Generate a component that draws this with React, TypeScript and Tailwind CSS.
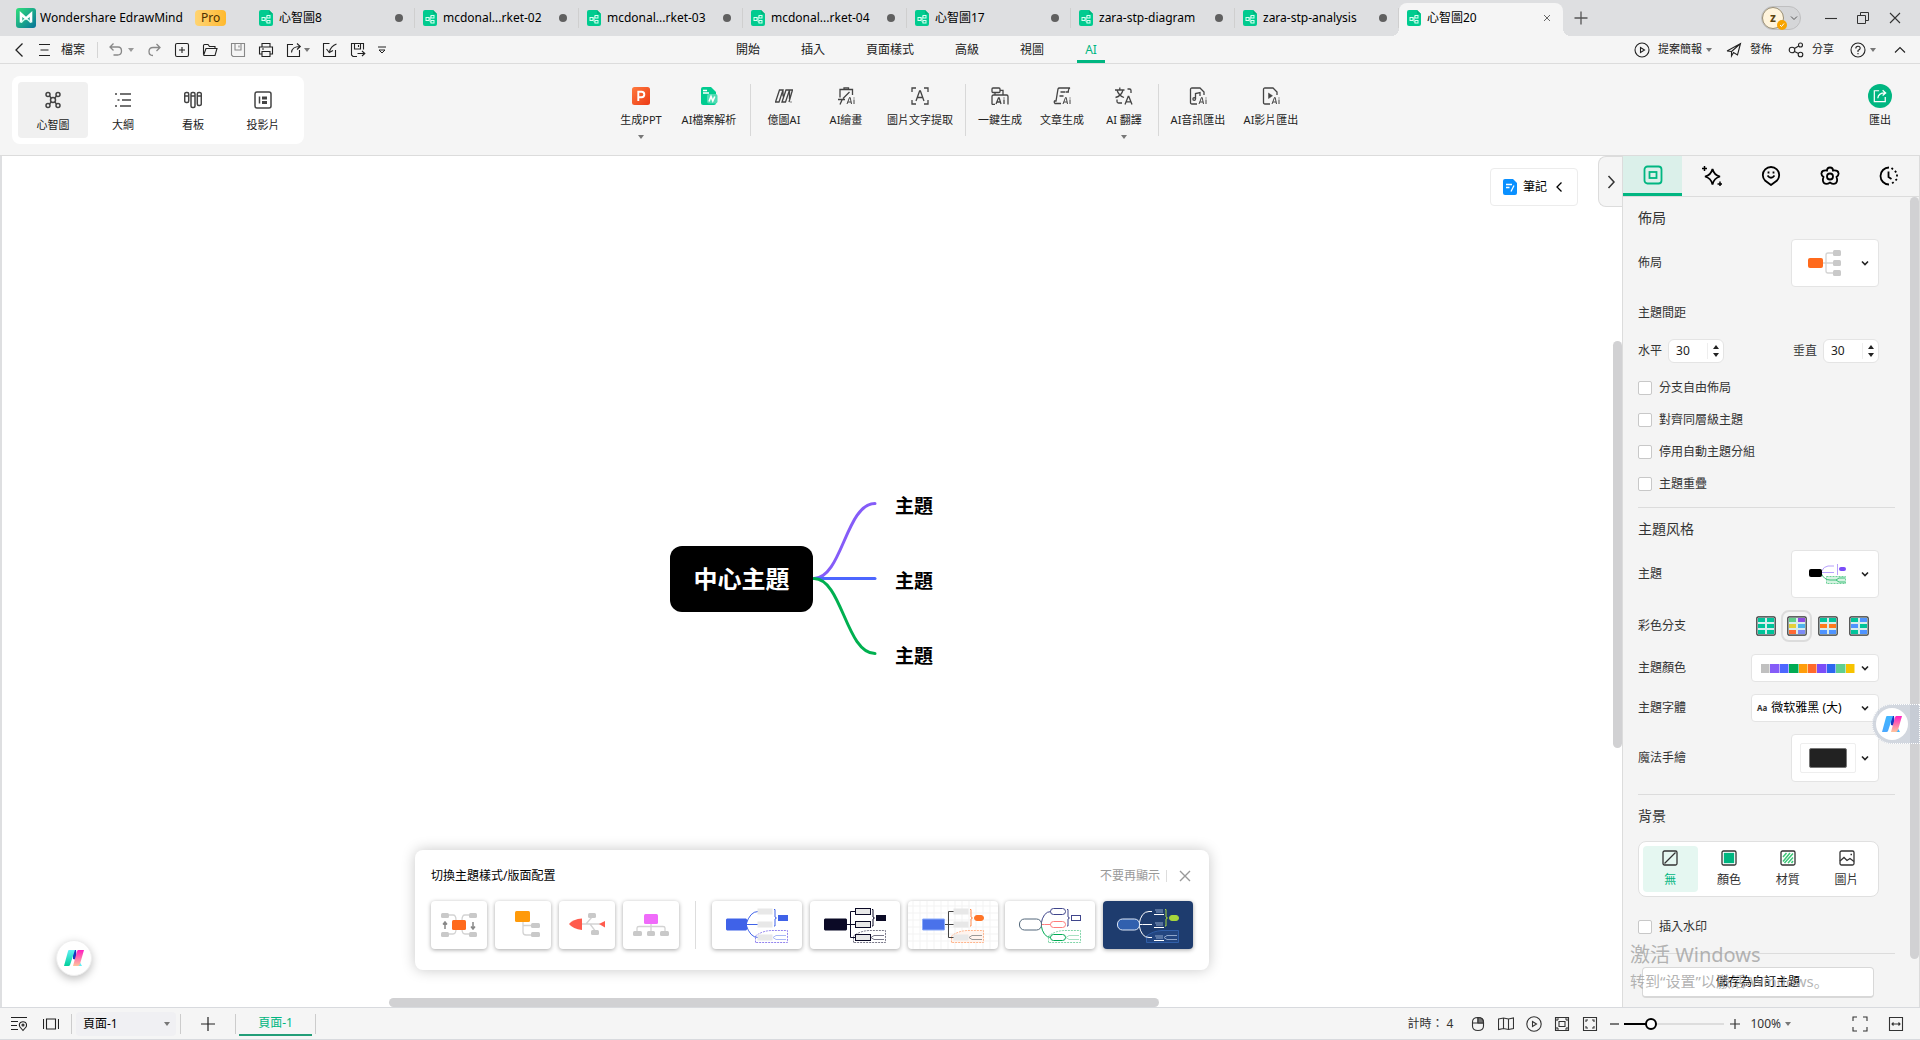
import React from "react";
import type { ReactNode } from "react";

type IconProps = {
  children: ReactNode;
  className?: string;
  box?: string;
  sw?: number;
};

const Icon = ({ children, className = "size-4", box = "0 0 16 16", sw = 1.1 }: IconProps) => (
  <svg
    viewBox={box}
    className={`shrink-0 ${className}`}
    fill="none"
    stroke="currentColor"
    strokeWidth={sw}
    aria-hidden="true"
  >
    {children}
  </svg>
);

const Caret = ({ className = "text-[#777]" }: { className?: string }) => (
  <svg viewBox="0 0 6 4" className={`w-1.5 h-1 shrink-0 ${className}`} aria-hidden="true">
    <path d="M0 0H6L3 4Z" fill="currentColor" />
  </svg>
);

const ChevronDown = () => (
  <Icon className="w-2 h-2 text-[#222]" box="0 0 8 8" sw={1.6}>
    <path d="M1 2.500L4 5.500L7 2.500" />
  </Icon>
);

const DocIcon = () => (
  <svg viewBox="0 0 14 16" className="w-3.5 h-4 shrink-0" aria-hidden="true">
    <path d="M2 0H10L14 4V14A2 2 0 0 1 12 16H2A2 2 0 0 1 0 14V2A2 2 0 0 1 2 0Z" fill="#00cb8f" />
    <path d="M10 0L14 4H11A1 1 0 0 1 10 3Z" fill="#00b37c" />
    <g fill="none" stroke="#d9fff2">
      <rect x="3" y="7.500" width="3" height="3" />
      <rect x="8" y="5.500" width="3" height="2.500" />
      <rect x="8" y="10.500" width="3" height="2.500" />
      <path d="M6 9H8M7 9V12H8M7 9V7H8" strokeWidth="0.700" />
    </g>
  </svg>
);

const AiLogo = ({ id, from, to }: { id: string; from: string; to: string }) => (
  <svg viewBox="0 0 20 16" className="w-5 h-4" aria-hidden="true">
    <defs>
      <linearGradient id={`${id}-l`} x1="0" y1="0" x2="0" y2="1">
        <stop offset="0" stopColor={from} />
        <stop offset="1" stopColor={to} />
      </linearGradient>
      <linearGradient id={`${id}-r`} x1="0" y1="0" x2="0" y2="1">
        <stop offset="0" stopColor="#ff1fc0" />
        <stop offset="1" stopColor="#ffc49b" />
      </linearGradient>
    </defs>
    <path d="M14 9L18 16H13Z" fill={from} />
    <path d="M9 0H12L13 10L9 9Z" fill="#1738c0" />
    <path d="M5 0H11L6 15Q5.600 16 4.500 16H0L4 1.200Q4.300 0 5 0Z" fill={`url(#${id}-l)`} />
    <path d="M14 0H20L16 14Q15.500 16 14 16H9L13 1.500Q13.400 0 14 0Z" fill={`url(#${id}-r)`} />
  </svg>
);

/* TITLE BAR */

const tabs = [
  "心智圖8",
  "mcdonal...rket-02",
  "mcdonal...rket-03",
  "mcdonal...rket-04",
  "心智圖17",
  "zara-stp-diagram",
  "zara-stp-analysis",
];

const TitleBar = () => (
  <header className="flex h-9 items-center bg-[#dedfe1] text-xs text-black">
    <div className="flex w-[251px] shrink-0 items-center pl-4">
      <svg viewBox="0 0 20 20" className="mr-1 size-5" aria-hidden="true">
        <defs>
          <linearGradient id="brand" x1="0" y1="0" x2="1" y2="1">
            <stop offset="0" stopColor="#2fe07a" />
            <stop offset="1" stopColor="#07729a" />
          </linearGradient>
        </defs>
        <rect width="20" height="20" rx="3" fill="url(#brand)" />
        <path d="M5 14.500V6L10 10.500L15 6V14.500" fill="none" stroke="#fff" strokeWidth="2.600" />
        <path d="M5 14.500L9 11M15 14.500L11 11" fill="none" stroke="#d5fff0" strokeWidth="1.500" />
      </svg>
      <span className="whitespace-nowrap">Wondershare EdrawMind</span>
      <span className="ml-3 rounded bg-gradient-to-r from-[#ffd471] to-[#ffb92b] px-1.5 text-xs leading-4 text-[#4d3000]">
        Pro
      </span>
    </div>
    <nav className="flex h-full shrink-0" aria-label="Documents">
      {tabs.map((tab) => (
        <a key={tab} href="#" className="flex w-[164px] items-center pl-2">
          <DocIcon />
          <span className="ml-1.5 flex-1 whitespace-nowrap">{tab}</span>
          <span className="mr-[11px] size-2 rounded-full bg-[#606060]"></span>
          <span className="h-5 w-px bg-[#cfcfcf]"></span>
        </a>
      ))}
      <a
        href="#"
        aria-current="page"
        className="relative mt-[3px] flex w-[164px] items-center rounded-t-lg bg-[#f5f5f5] pb-[3px] pl-2 before:absolute before:-left-2 before:bottom-0 before:size-2 before:bg-[radial-gradient(circle_at_0_0,transparent_8px,#f5f5f5_8px)] after:absolute after:-right-2 after:bottom-0 after:size-2 after:bg-[radial-gradient(circle_at_100%_0,transparent_8px,#f5f5f5_8px)]"
      >
        <DocIcon />
        <span className="ml-1.5 flex-1">心智圖20</span>
        <Icon className="mr-3 size-2 text-[#666]" box="0 0 8 8" sw={1}>
          <path d="M1 1L7 7M7 1L1 7" />
        </Icon>
      </a>
    </nav>
    <button aria-label="New tab" className="ml-2.5 text-[#555]">
      <Icon sw={1.3}>
        <path d="M8 1.500V14.500M1.500 8H14.500" />
      </Icon>
    </button>
    <div className="ml-auto flex items-center pr-4 text-[#333]">
      <button className="mr-6 flex h-6 w-10 items-center rounded-full border border-[#bfbfc0] bg-[#d5d6d8]">
        <span className="relative flex size-[22px] items-center justify-center rounded-full border border-[#9a8f75] bg-[#fff4dc] text-xs font-bold text-[#5c4410]">
          z
          <span className="absolute -right-1 -bottom-0.5 flex size-2.5 items-center justify-center rounded-full bg-[#f8a400]">
            <Icon className="size-2 text-white" box="0 0 8 8" sw={1}>
              <path d="M2 4L3.500 5.500L6 2.500" />
            </Icon>
          </span>
        </span>
        <Icon className="ml-1.5 size-2 text-[#555]" box="0 0 8 8" sw={1}>
          <path d="M1 2.500L4 5.500L7 2.500" />
        </Icon>
      </button>
      <button aria-label="Minimize" className="mr-5">
        <Icon className="size-3" box="0 0 12 12">
          <path d="M0 6.500H12" />
        </Icon>
      </button>
      <button aria-label="Restore" className="mr-5">
        <Icon className="size-3" box="0 0 12 12" sw={1}>
          <path d="M.5 3.500H8.500V11.500H.5ZM3.500 3.500V.5H11.500V8.500H8.500" />
        </Icon>
      </button>
      <button aria-label="Close" className="mr-[3px]">
        <Icon className="size-3" box="0 0 12 12">
          <path d="M1 1L11 11M11 1L1 11" />
        </Icon>
      </button>
    </div>
  </header>
);

/* MENU BAR */

const menus = ["開始", "插入", "頁面樣式", "高級", "視圖"];

const MenuBar = () => (
  <div className="flex h-7 border-b border-[#dcdcdc] bg-[#f5f5f5] text-xs text-[#222]">
    <div className="flex flex-1 items-center pl-[11px]">
      <button aria-label="Back">
        <Icon sw={1.3}>
          <path d="M11.500 1.500L5 8L11.500 14.500" />
        </Icon>
      </button>
      <button className="ml-2.5 flex items-center gap-2">
        <Icon>
          <path d="M2 2.500H13M3.500 8H11.500M2 13.500H13" />
        </Icon>
        檔案
      </button>
      <span className="mr-2.5 ml-3 h-4 w-px bg-[#d5d5d5]"></span>
      <button aria-label="Undo" className="flex items-center gap-1 text-[#888]">
        <Icon sw={1.3}>
          <path d="M5.500 1.500L2 5L5.500 8.500M2 5H10Q13.500 5 13.500 9Q13.500 13 9.500 13H5.500" />
        </Icon>
        <Caret className="text-[#999]" />
      </button>
      <button aria-label="Redo" className="ml-3 text-[#888]">
        <Icon sw={1.3}>
          <path d="M10.500 2L14 5.500L10.500 9M14 5.500H7Q3 5.500 3 9.500Q3 13.500 7 13.500" />
        </Icon>
      </button>
      <button aria-label="New" className="ml-3">
        <Icon>
          <rect x="1.500" y="1.500" width="13" height="13" rx="1.500" />
          <path d="M8 5V11M5 8H11" />
        </Icon>
      </button>
      <button aria-label="Open" className="ml-3">
        <Icon>
          <path d="M1.500 12.500V3.500Q1.500 2.500 2.500 2.500H6L7.500 4.500H13V6.500M1.700 13L4 6.500H15L13 13.500H2Z" />
        </Icon>
      </button>
      <button aria-label="Save" className="ml-3 text-[#888]">
        <Icon>
          <path d="M1.500 1.500H14.500V14.500H3L1.500 13ZM5 1.500V8H11V1.500M9 3.500V5.500" />
        </Icon>
      </button>
      <button aria-label="Print" className="ml-3">
        <Icon>
          <path d="M4 5V1.500H12V5M4 12H1.500V5H14.500V12H12M4 9.500H12V14.500H4ZM4 7H6" />
        </Icon>
      </button>
      <button aria-label="Share file" className="ml-3 flex items-center gap-0.5">
        <Icon>
          <path d="M7 2.500H1.500V14.500H13.500V8M5.500 10.500Q6 4.500 14 4.500M11 1.500L14.300 4.500L11 7.500" />
        </Icon>
        <Caret />
      </button>
      <button aria-label="Import" className="ml-3">
        <Icon>
          <path d="M7.500 1.500H1.500V14.500H13.500V8M14.500 2Q9 4 7.500 9.500M4.500 7L7.300 10.500L11 8.500" />
        </Icon>
      </button>
      <button aria-label="Save as" className="ml-3">
        <Icon>
          <path d="M7 14.500H3L1.500 13V1.500H13.500V7.500M4.500 1.500V7H10.500V1.500M8.500 3V5M7.500 11.500H14.500M12 9L14.800 11.500L12 14" />
        </Icon>
      </button>
      <button aria-label="More" className="ml-3">
        <Icon className="size-2" box="0 0 8 8" sw={1}>
          <path d="M0 1H8M1 4H7L4 7Z" />
        </Icon>
      </button>
    </div>
    <nav className="mr-[84px] flex gap-[41px]" aria-label="Ribbon">
      {menus.map((menu) => (
        <a key={menu} href="#" className="flex items-center">
          {menu}
        </a>
      ))}
      <a
        href="#"
        className="-mx-2 flex w-7 items-center justify-center border-b-3 border-[#00b681] pt-[3px] text-[#00b681]"
      >
        AI
      </a>
    </nav>
    <div className="flex flex-1 items-center justify-end pr-[14px] text-[11px]">
      <button className="mr-3.5 flex items-center gap-1">
        <Icon className="mr-1 size-4">
          <circle cx="8" cy="8" r="7" />
          <path d="M6.500 5.500L10.500 8L6.500 10.500Z" />
        </Icon>
        提案簡報
        <Caret />
      </button>
      <button className="mr-4 flex items-center gap-2">
        <Icon>
          <path d="M1 9L14.500 1.500L11.500 13L7.500 10.500L5.500 14V9.500L14.500 1.500M1 9L5.500 9.500" />
        </Icon>
        發佈
      </button>
      <button className="mr-4 flex items-center gap-2">
        <Icon>
          <circle cx="4" cy="8" r="2.800" />
          <circle cx="12.500" cy="3" r="2" />
          <circle cx="12.500" cy="12.500" r="2.300" />
          <path d="M6.500 6.500L10.700 4M6.500 9.500L10.500 11.500" />
        </Icon>
        分享
      </button>
      <button aria-label="Help" className="mr-[18px] flex items-center gap-1">
        <Icon>
          <circle cx="8" cy="8" r="7" />
          <path d="M5.800 6.500Q5.800 4.300 8 4.300T10.200 6.300Q10.200 7.500 8 8.500V10M8 11V12.200" />
        </Icon>
        <Caret />
      </button>
      <button aria-label="Collapse ribbon">
        <Icon className="size-3" box="0 0 12 12">
          <path d="M1 8.500L6 3.500L11 8.500" />
        </Icon>
      </button>
    </div>
  </div>
);

/* RIBBON */

const viewIcons = [
  {
    label: "心智圖",
    icon: (
      <>
        <circle cx="9" cy="9" r="2.500" />
        <circle cx="4" cy="3.500" r="2" />
        <circle cx="14" cy="3.500" r="2" />
        <circle cx="4" cy="14.500" r="2" />
        <circle cx="14" cy="14.500" r="2" />
        <path d="M5.500 5L7.200 7M12.500 5L10.800 7M5.500 13L7.200 11M12.500 13L10.800 11" />
      </>
    ),
  },
  {
    label: "大綱",
    icon: <path d="M1 3H3M6 3H17M3.500 9H5.500M8 9H17M1 15H3M6 15H17" />,
  },
  {
    label: "看板",
    icon: (
      <>
        <rect x=".7" y="1.500" width="4" height="10" rx="1.500" />
        <rect x="7" y="1.500" width="4" height="15" rx="1.500" />
        <rect x="13.300" y="1.500" width="4" height="13" rx="1.500" />
        <path d="M.7 5H4.700M7 5H11M13.300 5H17.300" />
      </>
    ),
  },
  {
    label: "投影片",
    icon: (
      <>
        <rect x="1" y="1" width="16" height="16" rx="2" />
        <path d="M5.500 5.500V12.500" />
        <path d="M8 7H13M8 11.500H13" strokeWidth="3" />
      </>
    ),
  },
];

const aiMark = (
  <path d="M10 17L12.500 10.500H13.200L14.500 17M10.800 15H14.200M17 12.500V17M17 10.500V11.500" strokeWidth="1" />
);

type Tool = { label: string; width: string; caret?: boolean; icon: ReactNode };

const toolGroups: Tool[][] = [
  [
    {
      label: "生成PPT",
      width: "w-16",
      caret: true,
      icon: (
        <>
          <defs>
            <linearGradient id="ppt" x1="0" y1="0" x2="1" y2="1">
              <stop offset="0" stopColor="#ff7a3d" />
              <stop offset="1" stopColor="#ec3a16" />
            </linearGradient>
          </defs>
          <rect width="18" height="18" rx="2.500" fill="url(#ppt)" stroke="none" />
          <path d="M6.300 14V4.800H9.500Q12.300 4.800 12.300 7.500T9.500 10.300H6.300" stroke="#fff" strokeWidth="1.900" />
        </>
      ),
    },
    {
      label: "AI檔案解析",
      width: "w-[72px]",
      icon: (
        <>
          <path d="M3 0H11L16 5V16A2 2 0 0 1 14 18H3A2 2 0 0 1 1 16V2A2 2 0 0 1 3 0Z" fill="#00cc90" stroke="none" />
          <path d="M3 3.500H7M3 6H9" stroke="#fff" />
          <rect x="7" y="7" width="10.500" height="9.500" rx="2" fill="#4fdcb3" stroke="none" />
          <path d="M9 14.500L11 9.500L12.800 14L14.800 9.500" stroke="#fff" strokeWidth="1.600" />
        </>
      ),
    },
  ],
  [
    {
      label: "億圖AI",
      width: "w-[60px]",
      icon: (
        <path d="M.5 15L4.500 3H8L4 15ZM8 3V9.500M7 15L11 3H14.500L10.500 15ZM14.500 3V12M14 15L17.500 3H14.500M16 14.500V15.500" />
      ),
    },
    {
      label: "AI繪畫",
      width: "w-16",
      icon: (
        <>
          <path d="M3 10.500V2.500H15.500V8M7 2.500V.8H11.500V2.500M1 12.500H8M12.500 5L6 11.500M5 13L3 17.500" />
          {aiMark}
        </>
      ),
    },
    {
      label: "圖片文字提取",
      width: "w-[84px]",
      icon: (
        <path d="M1 5V1H5M13 1H17V5M17 13V17H13M5 17H1V13M5 14L8.600 4H9.400L13 14M6.300 10.500H11.700" />
      ),
    },
  ],
  [
    {
      label: "一鍵生成",
      width: "w-[62px]",
      icon: (
        <>
          <rect x="1" y="1" width="8" height="4.500" rx="1" />
          <path d="M9 3.300H12V8M4 5.500V8M1 17.500V9.500Q1 8 2.500 8H15.500Q17 8 17 9.500V17.500M1 17.500H4" />
          <path d="M5 17L7.500 10.800H8.200L10 17M6 15H9.500M13 12.500V17M13 10.500V11.500" />
        </>
      ),
    },
    {
      label: "文章生成",
      width: "w-[62px]",
      icon: (
        <>
          <path d="M8 16.500H2Q.8 15.500 1.500 14H3L5 2Q5.300 1 6.500 1H17Q15.500 1.500 15.300 4V5H13M7.500 5H12.500M6.500 9H10.500" />
          {aiMark}
        </>
      ),
    },
    {
      label: "AI 翻譯",
      width: "w-[62px]",
      caret: true,
      icon: (
        <>
          <path d="M0 3H9.500M4.800 .5V3M8 3Q6.500 9 .5 10.500M2 3Q3.500 8.500 9 10.500M12.500 2H14.500Q16 2 16 3.500V6M2 12.500V14.500Q2 16 3.500 16H7" />
          <path d="M10 17.500L13.200 9.500H13.800L17 17.500M11.200 14.800H15.800" />
        </>
      ),
    },
  ],
  [
    {
      label: "AI音訊匯出",
      width: "w-[72px]",
      icon: (
        <>
          <path d="M8 17H3Q1.500 17 1.500 15.500V2.500Q1.500 1 3 1H11L15 5V8M6.500 12V6.500L11 5.500V9" />
          <circle cx="5.200" cy="12" r="1.300" />
          {aiMark}
        </>
      ),
    },
    {
      label: "AI影片匯出",
      width: "w-[74px]",
      icon: (
        <>
          <path d="M8 17H3Q1.500 17 1.500 15.500V2.500Q1.500 1 3 1H11L15 5V8" />
          <path d="M6.500 6L10.500 8.800L6.500 11.500Z" fill="currentColor" strokeWidth=".5" />
          {aiMark}
        </>
      ),
    },
  ],
];

const Ribbon = () => (
  <div className="grid h-[92px] grid-cols-[1fr_auto_1fr] items-start border-b border-[#dcdcdc] bg-[#f5f5f5] pt-3 text-[11px] text-[#222]">
    <div className="ml-3 flex w-[292px] rounded-lg bg-white p-1.5">
      {viewIcons.map((view, i) => (
        <button
          key={view.label}
          className={`flex h-14 w-[70px] flex-col items-center gap-2 rounded pt-[9px] ${i === 0 ? "bg-[#f0f0f0]" : ""}`}
        >
          <Icon className="size-[18px] text-[#444]" box="0 0 18 18" sw={1.5}>
            {view.icon}
          </Icon>
          <span className="leading-4">{view.label}</span>
        </button>
      ))}
    </div>
    <div className="flex pt-2">
      {toolGroups.map((group, i) => (
        <div
          key={i}
          className={`flex h-[52px] ${i === 0 ? "pr-[5px]" : "border-l border-[#d8d8d8] px-[3px]"}`}
        >
          {group.map((tool) => (
            <button key={tool.label} className={`flex flex-col items-center pt-[3px] ${tool.width}`}>
              <Icon className="size-[18px] text-[#444]" box="0 0 18 18" sw={1.3}>
                {tool.icon}
              </Icon>
              <span className="mt-[7px] whitespace-nowrap leading-4">{tool.label}</span>
              {tool.caret && <Caret className="mt-[7px] text-[#777]" />}
            </button>
          ))}
        </div>
      ))}
    </div>
    <button className="mr-7 flex flex-col items-center justify-self-end pt-2">
      <span className="flex size-6 items-center justify-center rounded-full bg-[#00b681] text-white">
        <Icon className="size-3.5" sw={1.4}>
          <path d="M7 2H1.500V14.500H14V9M5.500 10.500Q6 4.500 14 4.500M11 1.500L14.500 4.500L11 7.500" />
        </Icon>
      </span>
      <span className="mt-1 leading-4">匯出</span>
    </button>
  </div>
);

/* LAYOUT THUMBNAILS */

const layouts = [
  <g key="a">
    <path d="M18 14H22Q25 14 25 19M38 14H34Q31 14 31 19M18 33H22Q25 33 25 28M38 33H34Q31 33 31 28" />
    <g fill="#c9c9c9" stroke="none">
      <rect x="10" y="12" width="8" height="5" rx="1.500" />
      <rect x="38" y="12" width="8" height="5" rx="1.500" />
      <rect x="10" y="31" width="8" height="5" rx="1.500" />
      <rect x="38" y="31" width="8" height="5" rx="1.500" />
    </g>
    <rect x="21" y="19" width="14" height="10" rx="1.500" fill="#ff6a1c" stroke="none" />
    <path d="M14 28V21.500M12 23.500L14 21L16 23.500M42 21V27.500M40 25.500L42 28L44 25.500" stroke="#888" strokeWidth="1.500" />
  </g>,
  <g key="b">
    <path d="M28 20V31Q28 34 31 34H36M28 24.500H36" />
    <rect x="20" y="10" width="15" height="11" rx="1.500" fill="#ff9a0a" stroke="none" />
    <rect x="36" y="22" width="9" height="5" rx="1.500" fill="#c9c9c9" stroke="none" />
    <rect x="36" y="31" width="9" height="5" rx="1.500" fill="#c9c9c9" stroke="none" />
  </g>,
  <g key="c">
    <path d="M22 23H41M27 23L33 16M31 23L37 31" />
    <path d="M10 23Q14 18 23 17.500V29Q14 28 10 23Z" fill="#ff5b4d" stroke="none" />
    <path d="M40 23L46 20V26.500Z" fill="#ff5b4d" stroke="none" />
    <rect x="29" y="12" width="8" height="5" rx="1.500" fill="#c9c9c9" stroke="none" />
    <rect x="32" y="29" width="8" height="5" rx="1.500" fill="#c9c9c9" stroke="none" />
  </g>,
  <g key="d">
    <path d="M28 22V30M14 30V27Q14 25.500 16 25.500H40Q42 25.500 42 27V30" />
    <rect x="21" y="13" width="14" height="10" rx="1.500" fill="#f06bfa" stroke="none" />
    <g fill="#c9c9c9" stroke="none">
      <rect x="10" y="30" width="9" height="5" rx="1.500" />
      <rect x="24" y="30" width="8" height="5" rx="1.500" />
      <rect x="37" y="30" width="9" height="5" rx="1.500" />
    </g>
  </g>,
];

/* THEME THUMBNAILS */

type Theme = {
  name: string;
  root: string;
  rootStroke?: string;
  round?: boolean;
  elbow?: boolean;
  lines: string[];
  box: string;
  boxStroke: string[];
  brace: string;
  accent: string;
  accentStroke?: string;
  dash: string;
  dashFill?: string;
  sub: string;
  underline?: boolean;
};

const themes: Theme[] = [
  {
    name: "Blue curves",
    root: "#3f62e8",
    lines: ["#3f62e8", "#3f62e8", "#3f62e8"],
    box: "#e8e8e8",
    boxStroke: ["none", "none", "none"],
    brace: "#3f62e8",
    accent: "#3f62e8",
    dash: "#9384ee",
    sub: "#a8b8f5",
  },
  {
    name: "Black elbows",
    root: "#0b0a26",
    elbow: true,
    lines: ["#0b0a26", "#0b0a26", "#0b0a26"],
    box: "#e8e8e8",
    boxStroke: ["#0b0a26", "#0b0a26", "#0b0a26"],
    brace: "#0b0a26",
    accent: "#0b0a26",
    dash: "#777687",
    sub: "#777687",
  },
  {
    name: "Grid",
    root: "#4a72ea",
    rootStroke: "#8aaafa",
    elbow: true,
    lines: ["#444", "#444", "#444"],
    box: "#e8e8e8",
    boxStroke: ["none", "none", "none"],
    brace: "#ff8a4d",
    accent: "#ff7426",
    dash: "#ffb58c",
    dashFill: "#fff4ee",
    sub: "#999",
  },
  {
    name: "Outline",
    root: "#fff",
    rootStroke: "#52677a",
    round: true,
    lines: ["#40468c", "#ff7c7c", "#00ab54"],
    box: "#fff",
    boxStroke: ["#40468c", "#ff7c7c", "#00ab54"],
    brace: "#40468c",
    accent: "#fff",
    accentStroke: "#40468c",
    dash: "#80d5a9",
    sub: "#a6e0c2",
  },
  {
    name: "Navy",
    root: "#3160ae",
    rootStroke: "#dce6f5",
    round: true,
    lines: ["#fff", "#fff", "#fff"],
    box: "none",
    boxStroke: ["none", "none", "none"],
    brace: "#a7d63c",
    accent: "#a7d63c",
    dash: "#315fa8",
    dashFill: "#234680",
    sub: "#8fa6c9",
    underline: true,
  },
];

const ThemeThumb = ({ theme }: { theme: Theme }) => {
  const ends = [10.5, 23.5, 36.5];
  const start = theme.round ? 36 : theme.elbow ? 37 : 34;
  return (
    <svg viewBox="0 0 90 48" className="h-full w-full" fill="none" aria-hidden="true">
      {theme.name === "Grid" && (
        <path
          d="M5 0V48M12 0V48M19 0V48M26 0V48M33 0V48M40 0V48M47 0V48M54 0V48M61 0V48M68 0V48M75 0V48M82 0V48M0 5H90M0 12H90M0 19H90M0 26H90M0 33H90M0 40H90"
          stroke="#f3f3f3"
        />
      )}
      <path
        d="M43.500 41.500V35Q50 30 59 29.500H75.500V41.500Z"
        fill={theme.dashFill || "none"}
        stroke={theme.dash}
        strokeDasharray={theme.underline ? undefined : "2 1"}
      />
      {ends.map((y, i) => (
        <g key={y} stroke={theme.lines[i]}>
          {theme.elbow ? (
            <path d={`M${start} 23.500H40.500V${y}H46`} />
          ) : (
            <path d={`M${start} 23.500Q38 ${y} 46 ${y}${theme.underline ? "H49" : ""}`} />
          )}
          {theme.underline ? (
            <>
              <path d={`M51 ${y + 3}H61`} />
              <path d={`M52 ${y - 1.5}H60M53 ${y + 0.5}H60`} stroke="#8fa6c9" />
            </>
          ) : (
            <rect
              x="45.500"
              y={y - 3}
              width="15"
              height="6"
              rx={theme.round ? 3 : 0}
              fill={theme.box}
              stroke={theme.boxStroke[i]}
            />
          )}
        </g>
      ))}
      <rect
        x="14.500"
        y="18"
        width={theme.lines[0] === "#3f62e8" ? 20 : 22}
        height="11"
        rx={theme.round ? 5 : 0.5}
        fill={theme.root}
        stroke={theme.rootStroke || theme.root}
      />
      <path d="M62 8.500H63V16L64.500 17L63 18V25H62" stroke={theme.brace} />
      <rect
        x="66.500"
        y="14.500"
        width="9"
        height="5"
        rx={theme.accent === "#ff7426" || theme.underline ? 2.5 : 0}
        fill={theme.accent}
        stroke={theme.accentStroke || theme.accent}
      />
      <path d="M61 36.500L64 34.500H74M61 36.500L64 38.500H74" stroke={theme.sub} />
    </svg>
  );
};

const SwitchPanel = () => (
  <section className="absolute bottom-[37px] left-1/2 w-[794px] -translate-x-1/2 rounded-lg bg-white px-4 pt-[17px] pb-[21px] text-xs shadow-[0_0_14px_rgba(0,0,0,0.22)]">
    <div className="flex h-[18px] items-center justify-between">
      <h2 className="text-black">切換主題樣式/版面配置</h2>
      <div className="flex items-center text-[#999]">
        <button>不要再顯示</button>
        <span className="mx-1.5 h-3 w-px bg-[#ddd]"></span>
        <button aria-label="Close" className="ml-1">
          <Icon className="size-4" sw={1.4}>
            <path d="M3 3L13 13M13 3L3 13" />
          </Icon>
        </button>
      </div>
    </div>
    <div className="mt-4 flex h-12">
      <div className="flex gap-2">
        {layouts.map((layout, i) => (
          <button
            key={i}
            aria-label={`Layout ${i + 1}`}
            className="w-14 rounded bg-white shadow-[0_1px_4px_rgba(0,0,0,0.35)]"
          >
            <svg viewBox="0 0 56 48" fill="none" stroke="#d3d3d3" strokeWidth="1.300" aria-hidden="true">
              {layout}
            </svg>
          </button>
        ))}
      </div>
      <span className="mx-4 w-px bg-[#ddd]"></span>
      <div className="flex flex-1 justify-between">
        {themes.map((theme) => (
          <button
            key={theme.name}
            aria-label={theme.name}
            className={`w-[90px] overflow-hidden rounded shadow-[0_1px_4px_rgba(0,0,0,0.35)] ${theme.underline ? "bg-[#1e3c6e]" : "bg-white"}`}
          >
            <ThemeThumb theme={theme} />
          </button>
        ))}
      </div>
    </div>
  </section>
);

/* CANVAS */

const Canvas = () => (
  <main className="relative min-w-0 flex-1 overflow-hidden border-l-2 border-[#dedfe1] bg-white">
    <div className="absolute top-[340px] left-[668px] h-[180px] w-[280px] text-[19px] font-bold text-black">
      <svg viewBox="0 0 280 180" className="absolute inset-0" fill="none" strokeWidth="3" strokeLinecap="round" aria-hidden="true">
        <path d="M144 82.500C172 82.500 176 7.500 205 7.500" stroke="#855cf8" />
        <path d="M144 82.500H205" stroke="#4d66ff" />
        <path d="M144 82.500C172 82.500 176 157.500 205 157.500" stroke="#00b050" />
      </svg>
      <div className="absolute top-[50px] left-0 flex h-[66px] w-[143px] items-center justify-center rounded-xl bg-black text-2xl text-white">
        中心主題
      </div>
      <span className="absolute -top-0.5 left-[225px] leading-6">主題</span>
      <span className="absolute top-[73px] left-[225px] leading-6">主題</span>
      <span className="absolute top-[148px] left-[225px] leading-6">主題</span>
    </div>

    <button className="absolute top-3 right-11 flex h-[38px] w-[88px] items-center justify-center gap-1.5 rounded border border-[#ececec] bg-white text-xs text-black">
      <svg viewBox="0 0 14 16" className="h-4 w-3.5" aria-hidden="true">
        <path d="M2 0H10L14 4V14A2 2 0 0 1 12 16H2A2 2 0 0 1 0 14V2A2 2 0 0 1 2 0Z" fill="#0a90ff" />
        <path d="M3 5.500H9M3 8.500H6.500M8 12.500L11 6.500" fill="none" stroke="#fff" strokeWidth="1.300" />
      </svg>
      筆記
      <Icon className="size-3" box="0 0 12 12" sw={1.3}>
        <path d="M8.500 1.500L4 6L8.500 10.500" />
      </Icon>
    </button>
    <button
      aria-label="Hide panel"
      className="absolute top-0 right-0 flex h-[51px] w-6 items-center justify-center rounded-l-lg border border-r-0 border-[#dcdcdc] bg-[#f5f5f5] text-[#333]"
    >
      <Icon className="size-3.5" box="0 0 14 14" sw={1.5}>
        <path d="M4.500 1L10 7L4.500 13" />
      </Icon>
    </button>

    <button
      aria-label="AI assistant"
      className="absolute bottom-[31px] left-[54px] flex size-9 items-center justify-center rounded-full border border-[#eee] bg-white shadow-[0_3px_8px_rgba(0,0,0,0.25)]"
    >
      <AiLogo id="chat" from="#5ff0f5" to="#00cf9a" />
    </button>

    <SwitchPanel />

    {/* SCROLLBARS */}
    <div className="absolute top-[185px] right-0 h-[407px] w-[9px] rounded-full bg-[#d1d1d3]"></div>
    <div className="absolute bottom-0 left-[387px] h-[9px] w-[770px] rounded-full bg-[#d1d1d3]"></div>
  </main>
);

/* SIDE PANEL */

const panelTabs = [
  {
    label: "Style",
    icon: (
      <>
        <rect x="1.500" y="1.500" width="17" height="17" rx="3" />
        <rect x="6.500" y="7" width="7" height="6" />
      </>
    ),
  },
  {
    label: "AI",
    icon: (
      <>
        <path d="M10.500 3Q12 9 18 10.500Q12 12 10.500 18.500Q9 12 3 10.500Q9 9 10.500 3Z" />
        <path d="M2.500 0V5M0 2.500H5M18 15.500V20.500M15.500 18H20.500" strokeWidth="1.500" />
      </>
    ),
  },
  {
    label: "Sticker",
    icon: (
      <>
        <path d="M10 19L4 14.500Q1.800 12 1.800 9A8.200 8 0 0 1 18.200 9Q18.200 12 16 14.500Z" />
        <path d="M6.500 9.500Q10 14 13.500 9.500M7.500 5.500V7.500M12.500 5.500V7.500" />
      </>
    ),
  },
  {
    label: "Mark",
    icon: (
      <>
        <path d="M10 1.500Q13 1.500 13 4.500Q18 4 18.500 7Q19 9 16.500 11Q18 15 16 17Q13.500 19 10 16.500Q6.500 19 4 17Q2 15 3.500 11Q1 9 1.500 7Q2 4 7 4.500Q7 1.500 10 1.500Z" />
        <circle cx="10" cy="10.500" r="3" />
      </>
    ),
  },
  {
    label: "History",
    icon: (
      <>
        <path d="M10 1.500A8.500 8.500 0 1 0 10 18.500M9.500 5.500V11L12.500 13" />
        <path d="M12.500 2L18 7V13L12.500 18" strokeDasharray="2 2.500" />
      </>
    ),
  },
];

const Field = ({ label, children, className = "" }: { label: string; children: ReactNode; className?: string }) => (
  <div className={`mr-4 flex items-center justify-between ${className}`}>
    <span>{label}</span>
    {children}
  </div>
);

const Picker = ({ label, children }: { label: string; children: ReactNode }) => (
  <button
    aria-label={label}
    aria-haspopup="listbox"
    className="flex h-12 w-[88px] items-center justify-between rounded border border-[#e4e4e4] bg-white pr-[9px] pl-2"
  >
    {children}
    <ChevronDown />
  </button>
);

const Spinner = ({ label }: { label: string }) => (
  <div className="flex items-center gap-1.5">
    <label htmlFor={label}>{label}</label>
    <div className="flex h-6 w-14 items-center rounded-md border border-[#e4e4e4] bg-white">
      <input
        id={label}
        type="number"
        defaultValue={30}
        className="w-[38px] appearance-none pl-[7px] text-[#222] outline-none [appearance:textfield] [&::-webkit-inner-spin-button]:appearance-none"
      />
      <div className="flex h-4 flex-1 flex-col items-center justify-between border-l border-[#eee]">
        <button aria-label="Increase" className="flex h-2 items-center">
          <Caret className="rotate-180 text-[#222]" />
        </button>
        <button aria-label="Decrease" className="flex h-2 items-center">
          <Caret className="text-[#222]" />
        </button>
      </div>
    </div>
  </div>
);

const CheckRow = ({ label, className = "" }: { label: string; className?: string }) => (
  <label className={`flex h-8 items-center gap-[7px] ${className}`}>
    <input type="checkbox" className="size-3.5 appearance-none rounded-xs border border-[#c8c8c8] bg-white" />
    {label}
  </label>
);

const branchColors = [
  ["#00c49a", "#00c49a", "#00c49a", "#00c49a", "#00c49a", "#00c49a"],
  ["#5fd08c", "#8d4be0", "#e5cf3a", "#4db4ec", "#ff6a35", "#7d8bf5"],
  ["#00c49a", "#00c49a", "#ff7a1c", "#ff7a1c", "#4f94ff", "#4f94ff"],
  ["#00c49a", "#4f94ff", "#4f94ff", "#00c49a", "#00c49a", "#4f94ff"],
];

const palette = [
  "#c0c0c0",
  "#855cf8",
  "#4d66ff",
  "#00ab54",
  "#ff9d0a",
  "#ff6a2a",
  "#7b4df8",
  "#2c66f0",
  "#5fcf90",
  "#f7c300",
];

const backgrounds = [
  { label: "無", icon: <path d="M2.500 13.500L13.500 2.500" /> },
  { label: "顏色", icon: <rect x="3.500" y="3.500" width="9" height="9" fill="#00b681" stroke="#00b681" /> },
  {
    label: "材質",
    icon: (
      <path
        d="M3 7L6.500 3M3 11.500L10 3M4.500 13L13 3.500M8 13L13 7.500M11.500 13L13 11"
        stroke="#3cc878"
        strokeWidth="1.500"
      />
    ),
  },
  {
    label: "圖片",
    icon: <path d="M1 11L5 7.500L8 10.500L11 8.500L15 11.500M11.500 4.500H13" />,
  },
];

const SidePanel = () => (
  <aside className="relative flex w-[298px] shrink-0 flex-col border-x border-[#dcdcdc] bg-[#f4f4f4] text-xs text-[#333]">
    <nav className="flex h-[41px] shrink-0 border-b border-[#dcdcdc]" aria-label="Panel">
      {panelTabs.map((tab, i) => (
        <button
          key={tab.label}
          aria-label={tab.label}
          className={`flex flex-1 items-center justify-center ${i === 0 ? "border-b-3 border-[#00b681] bg-[#dbf0ea] text-[#00b681]" : "text-black"}`}
        >
          <Icon className="size-5" box="0 0 20 20" sw={1.8}>
            {tab.icon}
          </Icon>
        </button>
      ))}
    </nav>

    <div className="pr-6 pl-[15px]">
      <h2 className="flex h-[42px] items-center text-sm">佈局</h2>
      <Field label="佈局">
        <Picker label="佈局">
          <svg viewBox="0 0 52 32" className="h-8 w-[52px]" fill="none" stroke="#d3d3d3" strokeWidth="1.300" aria-hidden="true">
            <path d="M22 16H34M34 6H28Q26 6 26 8V24Q26 26 28 26H34" />
            <rect x="8" y="11" width="15" height="10" rx="2" fill="#ff6a1c" stroke="none" />
            <g fill="#c9c9c9" stroke="none">
              <rect x="33" y="3" width="8" height="6" rx="1.500" />
              <rect x="33" y="13" width="8" height="6" rx="1.500" />
              <rect x="33" y="23" width="8" height="6" rx="1.500" />
            </g>
          </svg>
        </Picker>
      </Field>
      <h3 className="flex h-13 items-center">主題間距</h3>
      <div className="mr-4 flex justify-between">
        <Spinner label="水平" />
        <Spinner label="垂直" />
      </div>
      <div className="mt-[9px]">
        <CheckRow label="分支自由佈局" />
        <CheckRow label="對齊同層級主題" />
        <CheckRow label="停用自動主題分組" />
        <CheckRow label="主題重疊" />
      </div>
      <hr className="mt-[7px] border-[#dcdcdc]" />

      <h2 className="flex h-[42px] items-center text-sm">主題风格</h2>
      <Field label="主題">
        <Picker label="主題">
          <svg viewBox="0 0 52 32" className="h-8 w-[52px]" fill="none" aria-hidden="true">
            <path d="M21 14Q24 8 28 8H34M21 14.500H34" stroke="#b6a0fb" />
            <path d="M37.500 6V17" stroke="#b6a0fb" />
            <rect x="39" y="9" width="7" height="4" rx="2" fill="#7b4df8" />
            <rect x="26.500" y="18.500" width="19" height="7" fill="#d5f3e1" stroke="#6fd09a" strokeDasharray="2 1" />
            <path d="M21 15Q24 22 30 22H36L39 20H45M36 22L39 24H45" stroke="#3cc07a" />
            <rect x="9" y="11" width="13" height="8" rx="2" fill="#000" />
          </svg>
        </Picker>
      </Field>
      <Field label="彩色分支" className="h-14">
        <div className="flex">
          {branchColors.map((colors, i) => (
            <button
              key={i}
              aria-label={`彩色分支 ${i + 1}`}
              className={`flex h-8 w-[31px] items-center justify-center rounded-lg ${i === 1 ? "border-2 border-[#dcdcdc]" : ""}`}
            >
              <svg viewBox="0 0 20 20" className="size-5 shrink-0" aria-hidden="true">
                <rect x=".8" y=".8" width="18.400" height="18.400" rx="1.500" fill="#d9ecec" stroke="#333" strokeWidth="1.200" />
                {colors.map((color, j) => (
                  <rect
                    key={j}
                    x={j % 2 ? 11 : 2}
                    y={2 + Math.floor(j / 2) * 6}
                    width="7"
                    height="4"
                    fill={color}
                  />
                ))}
              </svg>
            </button>
          ))}
          <span className="w-[5px]"></span>
        </div>
      </Field>
      <Field label="主題顏色">
        <button
          aria-label="主題顏色"
          aria-haspopup="listbox"
          className="flex h-7 w-32 items-center justify-between rounded border border-[#e4e4e4] bg-white pr-[9px] pl-[9px]"
        >
          <span className="flex h-[9px] w-[94px]">
            {palette.map((color) => (
              <span key={color} className="flex-1 border-r border-white/50" style={{ backgroundColor: color }}></span>
            ))}
          </span>
          <ChevronDown />
        </button>
      </Field>
      <div className="mt-3 mr-4 flex items-center justify-between">
        <label htmlFor="theme-font">主題字體</label>
        <div className="flex h-7 w-32 items-center rounded border border-[#e4e4e4] bg-white pr-[9px] pl-[5px]">
          <span className="mr-1 text-[8px] font-bold">Aa</span>
          <select
            id="theme-font"
            className="flex-1 appearance-none bg-transparent font-[Noto_Sans,Noto_Sans_CJK_SC,sans-serif] text-black outline-none"
          >
            <option>微软雅黑 (大)</option>
          </select>
          <ChevronDown />
        </div>
      </div>
      <Field label="魔法手繪" className="mt-3">
        <Picker label="魔法手繪">
          <span className="flex h-[30px] w-14 items-center justify-center rounded-xs border border-[#eee]">
            <span className="h-5 w-[38px] rounded-xs border border-[#777] bg-[#222]"></span>
          </span>
        </Picker>
      </Field>
      <hr className="mt-3 border-[#dcdcdc]" />

      <h2 className="flex h-[42px] items-center text-sm">背景</h2>
      <div className="mt-1 mr-4 flex h-14 gap-1 rounded-lg border border-[#e0e0e0] bg-white p-1">
        {backgrounds.map((bg, i) => (
          <button
            key={bg.label}
            className={`flex flex-1 flex-col items-center gap-1 rounded pt-1 leading-5 ${i === 0 ? "bg-[#e5f7f1] text-[#00b681]" : ""}`}
          >
            <Icon className="size-4 text-[#333]" sw={1.3}>
              <rect x="1" y="1" width="14" height="14" rx="1.500" />
              {bg.icon}
            </Icon>
            {bg.label}
          </button>
        ))}
      </div>
      <CheckRow label="插入水印" className="mt-[14px]" />
      <hr className="mt-[10px] border-[#dcdcdc]" />
      <button className="mt-[13px] ml-1 block h-[31px] w-[232px] rounded border border-b-2 border-[#d8d8d8] bg-white text-black">
        儲存為自訂主題
      </button>
    </div>

    <div className="absolute top-[41px] right-0 h-[762px] w-[9px] rounded-full bg-[#d1d1d3]"></div>

    {/* ACTIVATION NOTICE */}
    <div className="pointer-events-none absolute bottom-3.5 left-[7px] font-[Noto_Sans,Noto_Sans_CJK_SC,sans-serif] whitespace-nowrap text-[#a0a0a0]/80">
      <p className="text-xl leading-7">激活 Windows</p>
      <p className="text-[15px] leading-6">转到“设置”以激活 Windows。</p>
    </div>

    {/* FLOATING AI BUTTON */}
    <button
      aria-label="AI"
      className="absolute top-[548px] -right-px flex h-10 w-12 items-center rounded-l-full border border-dotted border-white bg-[#c3cad6]/70 pl-[3px]"
    >
      <span className="flex size-8 items-center justify-center rounded-full bg-white">
        <AiLogo id="float" from="#3fb6ff" to="#4aa8ff" />
      </span>
    </button>
  </aside>
);

/* STATUS BAR */

const StatusBar = () => (
  <footer className="flex h-[33px] shrink-0 items-center border-y border-[#d8dade] bg-[#f5f5f5] text-xs text-[#222]">
    <button aria-label="Locate" className="ml-[11px]">
      <Icon>
        <path d="M0 1.500H16M0 5.500H7M0 9.500H6M0 13.500H7M12 14.500L9 11Q7.500 8 9.500 6.500Q12 5 14.500 6.500Q16.300 8.500 15 11Z" />
        <circle cx="12" cy="9" r="1" />
      </Icon>
    </button>
    <button aria-label="Slides" className="ml-4">
      <Icon>
        <path d="M.5 3V13M15.500 3V13M3.500 3H12.500V13H3.500Z" />
      </Icon>
    </button>
    <span className="mr-1 ml-3 h-5 w-px bg-[#ccc]"></span>
    <div className="flex h-6 w-[100px] items-center rounded bg-[#f0f0f3] pr-1.5 pl-[7px]">
      <select aria-label="Page" className="flex-1 appearance-none bg-transparent text-black outline-none">
        <option>頁面-1</option>
      </select>
      <Caret />
    </div>
    <span className="ml-1 h-5 w-px bg-[#ccc]"></span>
    <button aria-label="Add page" className="mx-5">
      <Icon className="size-3.5" box="0 0 14 14" sw={1.2}>
        <path d="M7 0V14M0 7H14" />
      </Icon>
    </button>
    <span className="h-5 w-px bg-[#ccc]"></span>
    <a
      href="#"
      className="mx-[3px] flex h-7 w-[73px] items-center justify-center self-start border-b-2 border-[#229e78] pt-1 text-[#00b681]"
    >
      頁面-1
    </a>
    <span className="h-5 w-px bg-[#ccc]"></span>

    <div className="ml-auto flex items-center pr-4 text-[#333]">
      <span className="mr-[17px]">計時： 4</span>
      <button aria-label="Mouse mode" className="mr-3">
        <Icon>
          <path d="M8 1.500Q13.500 1.500 13.500 6V10Q13.500 14.500 8 14.500T2.500 10V6Q2.500 1.500 8 1.500ZM2.500 7H13.500M8 1.500V7" />
          <path d="M8 1.500Q13.500 1.500 13.500 7H8Z" fill="#777" />
        </Icon>
      </button>
      <button aria-label="Map" className="mr-3">
        <Icon>
          <path d="M.5 3L5.500 2L10.500 3L15.500 2V12.500L10.500 13.500L5.500 12.500L.5 13.500ZM5.500 2V12.500M10.500 3V13.500" />
        </Icon>
      </button>
      <button aria-label="Play" className="mr-3">
        <Icon>
          <circle cx="8" cy="8" r="7.200" />
          <path d="M6.500 5.500L10.500 8L6.500 10.500Z" />
        </Icon>
      </button>
      <button aria-label="Fit page" className="mr-3">
        <Icon>
          <path d="M1.500 1.500H14.500V14.500H1.500ZM5 5.500H11V10.500H5ZM3 5V3H5M11 3H13V5M13 11V13H11M5 13H3V11" />
        </Icon>
      </button>
      <button aria-label="Fit all" className="mr-3">
        <Icon>
          <path d="M1.500 1.500H14.500V14.500H1.500ZM4 6V4H6M10 4H12V6M12 10V12H10M6 12H4V10" />
        </Icon>
      </button>
      <button aria-label="Zoom out">
        <Icon className="size-2.5" box="0 0 10 10" sw={1.3}>
          <path d="M0 5H9" />
        </Icon>
      </button>
      <input
        type="range"
        aria-label="Zoom"
        min={10}
        max={400}
        defaultValue={100}
        className="mx-1 h-0.5 w-[100px] appearance-none bg-[linear-gradient(to_right,#000_26px,#ddd_26px)] [&::-webkit-slider-thumb]:size-3 [&::-webkit-slider-thumb]:appearance-none [&::-webkit-slider-thumb]:rounded-full [&::-webkit-slider-thumb]:border-2 [&::-webkit-slider-thumb]:border-black [&::-webkit-slider-thumb]:bg-white"
      />
      <button aria-label="Zoom in" className="ml-0.5">
        <Icon className="size-2.5" box="0 0 10 10" sw={1.2}>
          <path d="M0 5H10M5 0V10" />
        </Icon>
      </button>
      <button className="mr-[61px] ml-2.5 flex items-center gap-1">
        100%
        <Caret />
      </button>
      <button aria-label="Full screen" className="mr-5">
        <Icon>
          <path d="M1 5V1H5M11 1H15V5M15 11V15H11M5 15H1V11" />
        </Icon>
      </button>
      <button aria-label="Fit width">
        <Icon>
          <path d="M1.500 1.500H14.500V14.500H1.500ZM4 8H12M5.500 6.500L4 8L5.500 9.500M10.500 6.500L12 8L10.500 9.500" />
        </Icon>
      </button>
    </div>
  </footer>
);

const App = () => {
  return (
    <div className="flex h-screen flex-col overflow-hidden bg-[#f5f5f5] font-[Noto_Sans,Noto_Sans_CJK_TC,sans-serif]">
      <TitleBar />
      <MenuBar />
      <Ribbon />
      <div className="flex min-h-0 flex-1">
        <Canvas />
        <SidePanel />
      </div>
      <StatusBar />
    </div>
  );
};

export default App;
